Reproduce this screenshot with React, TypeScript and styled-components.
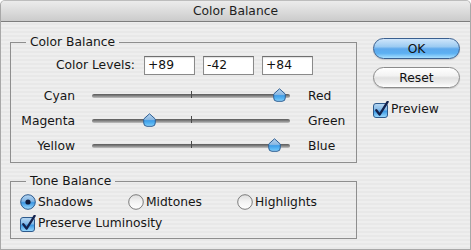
import React, { useId } from "react";
import styled, { createGlobalStyle } from "styled-components";

const FONT = `"DejaVu Sans", "Liberation Sans", sans-serif`;

const GlobalStyle = createGlobalStyle`
  html, body { margin: 0; padding: 0; background: #ffffff; }
  body { font-family: ${FONT}; }
`;

const Window = styled.div`
  width: 471px;
  height: 250px;
  box-sizing: border-box;
  border: 1px solid #a8a8a8;
  border-top-color: #bdbdbd;
  border-radius: 5px 5px 0 0;
  background: repeating-linear-gradient(
    to bottom,
    #eeeeee 0px,
    #eeeeee 2px,
    #e8e8e8 2px,
    #e8e8e8 4px
  );
  display: flex;
  flex-direction: column;
  overflow: hidden;
  font: 12.3px ${FONT};
  color: #161616;
`;

const TitleBar = styled.div`
  height: 21px;
  flex: none;
  box-sizing: border-box;
  border-bottom: 1px solid #7d7d7d;
  background: linear-gradient(to bottom, #ececec 0%, #dcdcdc 50%, #cbcbcb 100%);
  display: flex;
  align-items: center;
  justify-content: center;
  font-size: 12.3px;
  color: #1e1e1e;
  border-radius: 4px 4px 0 0;
`;

const Body = styled.div`
  display: flex;
  align-items: flex-start;
  padding-left: 9px;
`;

const MainColumn = styled.div`
  display: flex;
  flex-direction: column;
  width: 347px;
`;

const Group = styled.fieldset<{ $top: number; $bottom: number }>`
  margin: ${(p) => p.$top}px 0 0 0;
  padding: 0 0 ${(p) => p.$bottom}px 0;
  border: 1px solid #8e8e8e;
  min-width: 0;
  box-sizing: border-box;
  width: 347px;
  display: flex;
  flex-direction: column;
`;

const Legend = styled.legend`
  margin-left: 15px;
  padding: 0 4px;
  line-height: 14px;
  font-size: 12.3px;
  color: #161616;
`;

const LevelsRow = styled.div`
  display: flex;
  align-items: center;
  height: 20px;
  margin-top: 6px;
  margin-bottom: 8px;
`;

const LevelsLabel = styled.div`
  width: 124px;
  text-align: right;
  margin-right: 9px;
`;

const LevelInput = styled.div`
  width: 51px;
  height: 19px;
  box-sizing: border-box;
  border: 1px solid #8a8a8a;
  border-top-color: #6f6f6f;
  background: #ffffff;
  box-shadow: inset 0 1px 1px rgba(0, 0, 0, 0.12);
  display: flex;
  align-items: center;
  padding-left: 3px;
  font-size: 12.3px;
  color: #111;
  & + & {
    margin-left: 8px;
  }
`;

const SliderRow = styled.div`
  display: flex;
  align-items: center;
  height: 25px;
`;

const SideLabel = styled.div`
  width: 64px;
  text-align: right;
  margin-right: 17px;
`;

const EndLabel = styled.div`
  margin-left: 18px;
`;

const Track = styled.div`
  position: relative;
  width: 198px;
  height: 4px;
  border-radius: 2px;
  background: linear-gradient(to bottom, #5a5a5a 0%, #858585 50%, #c2c2c2 100%);
`;

const Tick = styled.div`
  position: absolute;
  left: 99px;
  top: -3px;
  width: 1px;
  height: 7px;
  background: #4a4a4a;
`;

const ThumbWrap = styled.div`
  position: absolute;
  top: -6px;
  width: 13px;
  height: 14px;
  margin-left: -6px;
  display: flex;
`;

const Thumb: React.FC<{ value: number }> = ({ value }) => {
  const id = useId().replace(/:/g, "");
  const left = 99 + value * 0.99;
  return (
    <ThumbWrap style={{ left }}>
      <svg width="13" height="14" viewBox="0 0 13 14">
        <defs>
          <linearGradient id={`tg${id}`} x1="0" y1="0" x2="0" y2="1">
            <stop offset="0" stopColor="#b5d3ee" />
            <stop offset="0.45" stopColor="#8cb9e2" />
            <stop offset="0.55" stopColor="#3d9de8" />
            <stop offset="0.85" stopColor="#62bdf6" />
            <stop offset="1" stopColor="#a5dcff" />
          </linearGradient>
        </defs>
        <path
          d="M6.5 0.8 L12.3 6 V9.8 Q12.3 13.3 9 13.3 H4 Q0.7 13.3 0.7 9.8 V6 Z"
          fill={`url(#tg${id})`}
          stroke="#2f5f93"
          strokeWidth="1"
          strokeLinejoin="round"
        />
      </svg>
    </ThumbWrap>
  );
};

const ToneRow = styled.div`
  display: grid;
  grid-template-columns: 108px 109px auto;
  padding-left: 9px;
  height: 20px;
  align-items: center;
  margin-top: 4px;
`;

const CheckRow = styled.div`
  display: flex;
  align-items: center;
  padding-left: ${(p: { $pad?: number }) => p.$pad ?? 9}px;
  height: 20px;
  margin-top: 1px;
`;

const Option = styled.div`
  display: flex;
  align-items: center;
  gap: 2px;
`;

const RightColumn = styled.div`
  display: flex;
  flex-direction: column;
  width: 87px;
  margin-left: 16px;
  margin-top: 16px;
`;

const Button = styled.div<{ $primary?: boolean }>`
  height: 21px;
  box-sizing: border-box;
  border-radius: 11px;
  display: flex;
  align-items: center;
  justify-content: center;
  font-size: 12.3px;
  color: #111;
  border: 1px solid ${(p) => (p.$primary ? "#3a5f8f" : "#8b8b8b")};
  background: ${(p) =>
    p.$primary
      ? "linear-gradient(to bottom, #cfe6fb 0%, #9ccbf2 40%, #5ea9ec 52%, #5cb0f2 75%, #a8e0ff 100%)"
      : "linear-gradient(to bottom, #ffffff 0%, #f3f3f3 40%, #e1e1e1 52%, #efefef 80%, #ffffff 100%)"};
  box-shadow: 0 1px 1px rgba(0, 0, 0, 0.15);
  & + & {
    margin-top: 8px;
  }
`;

const PreviewRow = styled.div`
  display: flex;
  align-items: center;
  gap: 2px;
  height: 16px;
  margin-top: 13px;
`;

const CheckBox: React.FC = () => {
  const id = useId().replace(/:/g, "");
  return (
    <svg width="16" height="17" viewBox="0 0 16 17" style={{ flex: "none" }}>
      <defs>
        <linearGradient id={`cg${id}`} x1="0" y1="0" x2="0" y2="1">
          <stop offset="0" stopColor="#b9d8f3" />
          <stop offset="0.45" stopColor="#82b8e6" />
          <stop offset="0.55" stopColor="#3b98e3" />
          <stop offset="1" stopColor="#9fdcff" />
        </linearGradient>
      </defs>
      <rect x="0.5" y="2.5" width="14" height="14" rx="2.5" fill={`url(#cg${id})`} stroke="#2e5a8c" />
      <path d="M3.3 9.2 L6.6 13.6 L14.6 0.8" fill="none" stroke="#13224d" strokeWidth="2.3" strokeLinecap="round" strokeLinejoin="round" />
    </svg>
  );
};

const Radio: React.FC<{ on?: boolean }> = ({ on }) => {
  const id = useId().replace(/:/g, "");
  return (
    <svg width="16" height="16" viewBox="0 0 16 16" style={{ flex: "none" }}>
      <defs>
        <linearGradient id={`rg${id}`} x1="0" y1="0" x2="0" y2="1">
          {on ? (
            <>
              <stop offset="0" stopColor="#b7d6f2" />
              <stop offset="0.45" stopColor="#7fb4e4" />
              <stop offset="0.55" stopColor="#3a96e2" />
              <stop offset="1" stopColor="#a4deff" />
            </>
          ) : (
            <>
              <stop offset="0" stopColor="#dedede" />
              <stop offset="0.5" stopColor="#f4f4f4" />
              <stop offset="1" stopColor="#ffffff" />
            </>
          )}
        </linearGradient>
      </defs>
      <circle cx="8" cy="8" r="7.3" fill={`url(#rg${id})`} stroke={on ? "#2d5a8c" : "#7c7c7c"} strokeWidth="1" />
      {on && <circle cx="8" cy="8" r="2.6" fill="#101a3a" />}
    </svg>
  );
};

const sliders = [
  { left: "Cyan", right: "Red", value: 89 },
  { left: "Magenta", right: "Green", value: -42 },
  { left: "Yellow", right: "Blue", value: 84 },
];

export default function App() {
  return (
    <>
      <GlobalStyle />
      <Window>
        <TitleBar>Color Balance</TitleBar>
        <Body>
          <MainColumn>
            <Group $top={13} $bottom={4}>
              <Legend>Color Balance</Legend>
              <LevelsRow>
                <LevelsLabel>Color Levels:</LevelsLabel>
                <LevelInput>+89</LevelInput>
                <LevelInput>-42</LevelInput>
                <LevelInput>+84</LevelInput>
              </LevelsRow>
              {sliders.map((s) => (
                <SliderRow key={s.left}>
                  <SideLabel>{s.left}</SideLabel>
                  <Track>
                    <Tick />
                    <Thumb value={s.value} />
                  </Track>
                  <EndLabel>{s.right}</EndLabel>
                </SliderRow>
              ))}
            </Group>
            <Group $top={11} $bottom={5}>
              <Legend>Tone Balance</Legend>
              <ToneRow>
                <Option>
                  <Radio on />
                  Shadows
                </Option>
                <Option>
                  <Radio />
                  Midtones
                </Option>
                <Option>
                  <Radio />
                  Highlights
                </Option>
              </ToneRow>
              <CheckRow>
                <Option>
                  <CheckBox />
                  Preserve Luminosity
                </Option>
              </CheckRow>
            </Group>
          </MainColumn>
          <RightColumn>
            <Button $primary>OK</Button>
            <Button>Reset</Button>
            <PreviewRow>
              <CheckBox />
              Preview
            </PreviewRow>
          </RightColumn>
        </Body>
      </Window>
    </>
  );
}
